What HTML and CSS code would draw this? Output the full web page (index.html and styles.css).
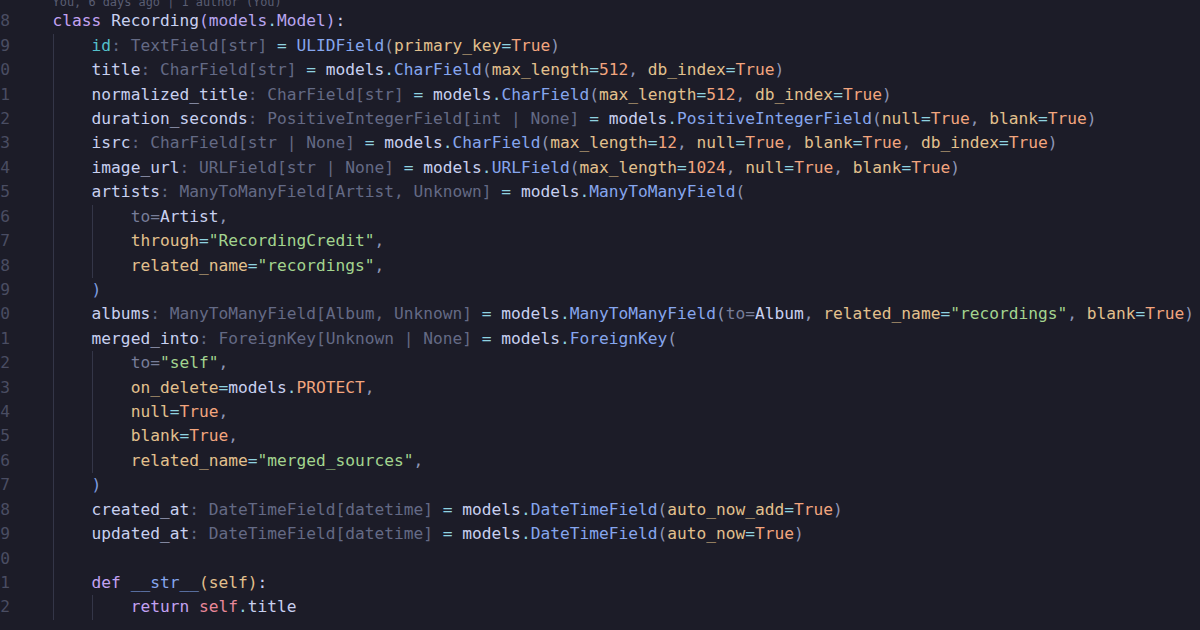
FILE: index.html
```html
<!DOCTYPE html>
<html lang="en">
<head>
<meta charset="utf-8">
<title>models.py</title>
<link rel="stylesheet" href="styles.css">
</head>
<body>
<div class="editor">
  <div class="ln lens"><span class="num"></span><span class="src lens-text">You, 6 days ago | 1 author (You)</span></div>
  <div class="ln"><span class="num">18</span><span class="src"><span class="k">class</span> Recording<span class="m">(models</span><span class="d">.</span><span class="m">Model)</span>:</span></div>
  <div class="ln"><span class="num">19</span><span class="src"><span class="ig"></span><span class="i">id</span><span class="h">: TextField[str]</span> <span class="o">=</span> <span class="f">ULIDField</span><span class="b">(</span><span class="p">primary_key</span><span class="o">=</span><span class="c">True</span><span class="b">)</span></span></div>
  <div class="ln"><span class="num">20</span><span class="src"><span class="ig"></span>title<span class="h">: CharField[str]</span> <span class="o">=</span> models<span class="d">.</span><span class="f">CharField</span><span class="b">(</span><span class="p">max_length</span><span class="o">=</span><span class="c">512</span><span class="b">,</span> <span class="p">db_index</span><span class="o">=</span><span class="c">True</span><span class="b">)</span></span></div>
  <div class="ln"><span class="num">21</span><span class="src"><span class="ig"></span>normalized_title<span class="h">: CharField[str]</span> <span class="o">=</span> models<span class="d">.</span><span class="f">CharField</span><span class="b">(</span><span class="p">max_length</span><span class="o">=</span><span class="c">512</span><span class="b">,</span> <span class="p">db_index</span><span class="o">=</span><span class="c">True</span><span class="b">)</span></span></div>
  <div class="ln"><span class="num">22</span><span class="src"><span class="ig"></span>duration_seconds<span class="h">: PositiveIntegerField[int | None]</span> <span class="o">=</span> models<span class="d">.</span><span class="f">PositiveIntegerField</span><span class="b">(</span><span class="p">null</span><span class="o">=</span><span class="c">True</span><span class="b">,</span> <span class="p">blank</span><span class="o">=</span><span class="c">True</span><span class="b">)</span></span></div>
  <div class="ln"><span class="num">23</span><span class="src"><span class="ig"></span>isrc<span class="h">: CharField[str | None]</span> <span class="o">=</span> models<span class="d">.</span><span class="f">CharField</span><span class="b">(</span><span class="p">max_length</span><span class="o">=</span><span class="c">12</span><span class="b">,</span> <span class="p">null</span><span class="o">=</span><span class="c">True</span><span class="b">,</span> <span class="p">blank</span><span class="o">=</span><span class="c">True</span><span class="b">,</span> <span class="p">db_index</span><span class="o">=</span><span class="c">True</span><span class="b">)</span></span></div>
  <div class="ln"><span class="num">24</span><span class="src"><span class="ig"></span>image_url<span class="h">: URLField[str | None]</span> <span class="o">=</span> models<span class="d">.</span><span class="f">URLField</span><span class="b">(</span><span class="p">max_length</span><span class="o">=</span><span class="c">1024</span><span class="b">,</span> <span class="p">null</span><span class="o">=</span><span class="c">True</span><span class="b">,</span> <span class="p">blank</span><span class="o">=</span><span class="c">True</span><span class="b">)</span></span></div>
  <div class="ln"><span class="num">25</span><span class="src"><span class="ig"></span>artists<span class="h">: ManyToManyField[Artist, Unknown]</span> <span class="o">=</span> models<span class="d">.</span><span class="f">ManyToManyField</span><span class="b">(</span></span></div>
  <div class="ln"><span class="num">26</span><span class="src"><span class="ig"></span><span class="ig"></span><span class="g">to=</span>Artist<span class="b">,</span></span></div>
  <div class="ln"><span class="num">27</span><span class="src"><span class="ig"></span><span class="ig"></span><span class="p">through</span><span class="o">=</span><span class="s">"RecordingCredit"</span><span class="b">,</span></span></div>
  <div class="ln"><span class="num">28</span><span class="src"><span class="ig"></span><span class="ig"></span><span class="p">related_name</span><span class="o">=</span><span class="s">"recordings"</span><span class="b">,</span></span></div>
  <div class="ln"><span class="num">29</span><span class="src"><span class="ig"></span><span class="pb">)</span></span></div>
  <div class="ln"><span class="num">30</span><span class="src"><span class="ig"></span>albums<span class="h">: ManyToManyField[Album, Unknown]</span> <span class="o">=</span> models<span class="d">.</span><span class="f">ManyToManyField</span><span class="b">(</span><span class="g">to=</span>Album<span class="b">,</span> <span class="p">related_name</span><span class="o">=</span><span class="s">"recordings"</span><span class="b">,</span> <span class="p">blank</span><span class="o">=</span><span class="c">True</span><span class="b">)</span></span></div>
  <div class="ln"><span class="num">31</span><span class="src"><span class="ig"></span>merged_into<span class="h">: ForeignKey[Unknown | None]</span> <span class="o">=</span> models<span class="d">.</span><span class="f">ForeignKey</span><span class="b">(</span></span></div>
  <div class="ln"><span class="num">32</span><span class="src"><span class="ig"></span><span class="ig"></span><span class="g">to=</span><span class="s">"self"</span><span class="b">,</span></span></div>
  <div class="ln"><span class="num">33</span><span class="src"><span class="ig"></span><span class="ig"></span><span class="p">on_delete</span><span class="o">=</span>models<span class="d">.</span><span class="c">PROTECT</span><span class="b">,</span></span></div>
  <div class="ln"><span class="num">34</span><span class="src"><span class="ig"></span><span class="ig"></span><span class="p">null</span><span class="o">=</span><span class="c">True</span><span class="b">,</span></span></div>
  <div class="ln"><span class="num">35</span><span class="src"><span class="ig"></span><span class="ig"></span><span class="p">blank</span><span class="o">=</span><span class="c">True</span><span class="b">,</span></span></div>
  <div class="ln"><span class="num">36</span><span class="src"><span class="ig"></span><span class="ig"></span><span class="p">related_name</span><span class="o">=</span><span class="s">"merged_sources"</span><span class="b">,</span></span></div>
  <div class="ln"><span class="num">37</span><span class="src"><span class="ig"></span><span class="pb">)</span></span></div>
  <div class="ln"><span class="num">38</span><span class="src"><span class="ig"></span>created_at<span class="h">: DateTimeField[datetime]</span> <span class="o">=</span> models<span class="d">.</span><span class="f">DateTimeField</span><span class="b">(</span><span class="p">auto_now_add</span><span class="o">=</span><span class="c">True</span><span class="b">)</span></span></div>
  <div class="ln"><span class="num">39</span><span class="src"><span class="ig"></span>updated_at<span class="h">: DateTimeField[datetime]</span> <span class="o">=</span> models<span class="d">.</span><span class="f">DateTimeField</span><span class="b">(</span><span class="p">auto_now</span><span class="o">=</span><span class="c">True</span><span class="b">)</span></span></div>
  <div class="ln"><span class="num">40</span><span class="src"><span class="ig"></span></span></div>
  <div class="ln"><span class="num">41</span><span class="src"><span class="ig"></span><span class="k">def</span> <span class="f">__str__</span><span class="p">(self)</span>:</span></div>
  <div class="ln"><span class="num">42</span><span class="src"><span class="ig"></span><span class="ig"></span><span class="k">return</span> <span class="v">self</span><span class="d">.</span>title</span></div>
  <div class="ln"><span class="num">43</span><span class="src"></span></div>
</div>
</body>
</html>
```

FILE: styles.css
```css
html, body {
  margin: 0;
  padding: 0;
  background: #1c1c28;
  overflow: hidden;
}

.editor {
  width: 1200px;
  height: 630px;
  overflow: hidden;
  margin-top: -8.7px;
  font-family: "DejaVu Sans Mono", "Liberation Mono", monospace;
  font-size: 16.22px;
  color: #c8d0f0;
}

.ln {
  display: flex;
  height: 24.43px;
  line-height: 24.43px;
}

.num {
  flex: 0 0 40px;
  margin-left: -30px;
  text-align: right;
  color: #4a4d62;
}

.src {
  padding-left: 42.6px;
  white-space: pre;
}

.lens {
  height: 18px;
  line-height: 18px;
}

.lens-text {
  font-size: 11.9px;
  color: #5a5e73;
  line-height: 14px;
  padding-top: 4px;
}

.ig {
  display: inline-block;
  width: 4ch;
  height: 24.43px;
  vertical-align: top;
  box-shadow: inset 1px 0 0 #343648;
}

.k { color: #c3a2f2; }
.m { color: #b9a5f0; }
.i { color: #55c0cb; }
.h { color: #646a85; }
.o { color: #8fd3e0; }
.d { color: #8fd3e0; }
.f { color: #86a6ee; }
.p { color: #e2c08d; }
.c { color: #f2a57e; }
.s { color: #a3d48f; }
.b { color: #8e96b6; }
.pb { color: #7f9ee0; }
.g { color: #777d99; }
.v { color: #e8879a; }
```
